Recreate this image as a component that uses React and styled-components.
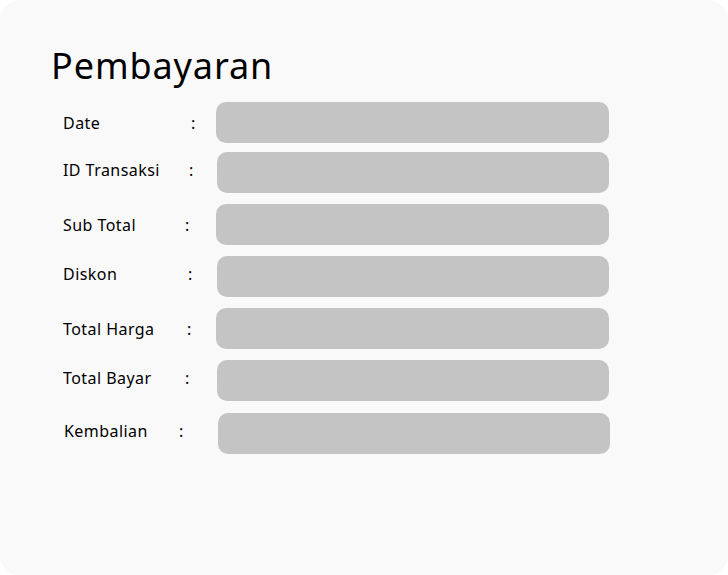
import React from "react";
import styled, { createGlobalStyle } from "styled-components";

const Global = createGlobalStyle`
  html, body { margin: 0; padding: 0; background: #ffffff; }
  body { font-family: "Noto Sans", "Lato", sans-serif; color: #000; }
`;

const Card = styled.div`
  width: 728px;
  height: 575px;
  box-sizing: border-box;
  background: #f9f9f9;
  border-radius: 20px;
  padding: 46px 0 0 51px;
`;

const Title = styled.h1`
  margin: 0 0 16px 0;
  font-size: 36px;
  line-height: 40px;
  font-weight: 400;
  letter-spacing: 0.9px;
`;

const Form = styled.div`
  display: flex;
  flex-direction: column;
`;

const Row = styled.div`
  display: grid;
  grid-template-columns: ${(p) => p.$colon - p.$label}px ${(p) => p.$field - p.$colon}px ${(p) => p.$right - p.$field}px;
  align-items: center;
  padding-left: ${(p) => p.$label - 51}px;
  margin-top: ${(p) => p.$gap}px;
  height: 41px;
`;

const Label = styled.span`
  font-size: 16px;
  letter-spacing: 0.45px;
  position: relative;
  top: ${(p) => p.$shift}px;
  white-space: nowrap;
`;

const Colon = styled(Label)``;

const Field = styled.div`
  height: 41px;
  border-radius: 10px;
  background: #c4c4c4;
`;

const rows = [
  { label: "Date", x: 63, colon: 191, field: 216, right: 609, gap: 0, shift: 0 },
  { label: "ID Transaksi", x: 63, colon: 189, field: 217, right: 609, gap: 9, shift: -3 },
  { label: "Sub Total", x: 63, colon: 185, field: 216, right: 609, gap: 11, shift: 0 },
  { label: "Diskon", x: 63, colon: 188, field: 217, right: 609, gap: 11, shift: -3 },
  { label: "Total Harga", x: 63, colon: 187, field: 216, right: 609, gap: 11, shift: 0 },
  { label: "Total Bayar", x: 63, colon: 185, field: 217, right: 609, gap: 11, shift: -3 },
  { label: "Kembalian", x: 64, colon: 179, field: 218, right: 610, gap: 12, shift: -3 },
];

export default function App() {
  return (
    <>
      <Global />
      <Card>
        <Title>Pembayaran</Title>
        <Form>
          {rows.map((r) => (
            <Row
              key={r.label}
              $label={r.x}
              $colon={r.colon}
              $field={r.field}
              $right={r.right}
              $gap={r.gap}
            >
              <Label $shift={r.shift}>{r.label}</Label>
              <Colon $shift={r.shift}>:</Colon>
              <Field />
            </Row>
          ))}
        </Form>
      </Card>
    </>
  );
}
